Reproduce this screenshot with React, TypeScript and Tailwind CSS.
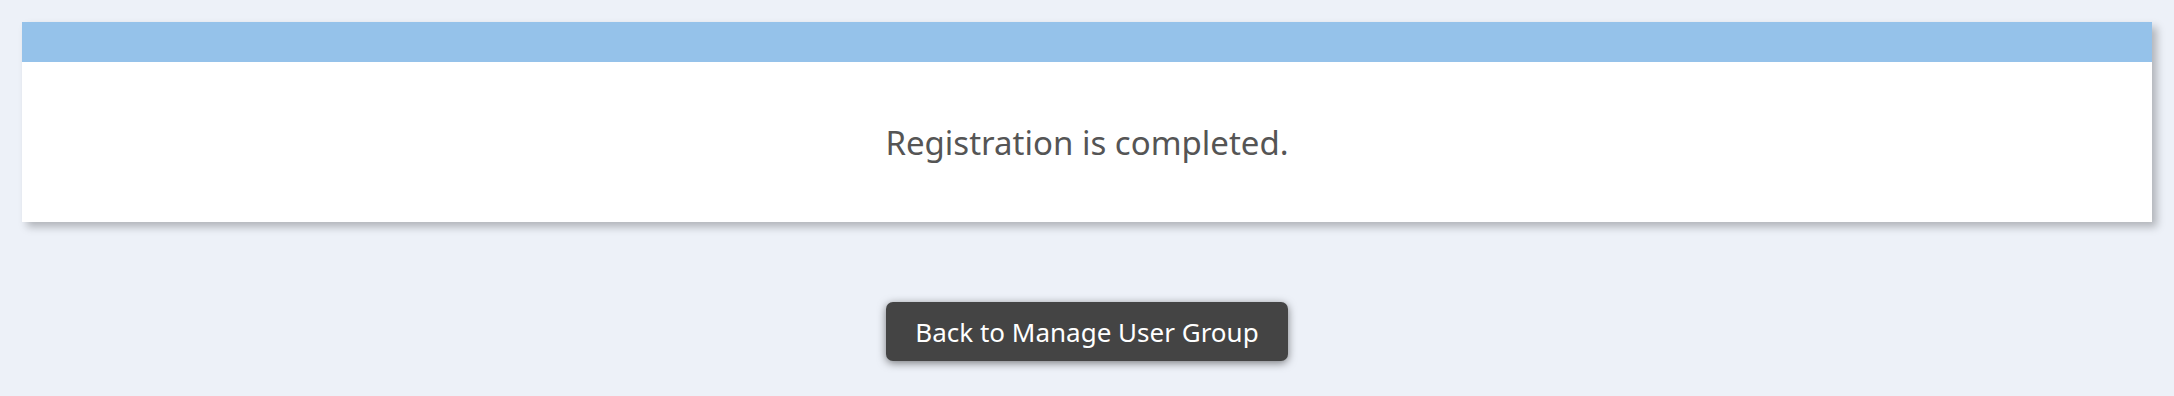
export default function App() {
  return (
    <div className="min-h-[396px] w-full bg-[#edf1f8] px-[22px] pt-[22px] font-['Noto_Sans',Arial,sans-serif]">
      <section className="bg-white shadow-[5px_5px_8px_rgba(0,0,0,0.25)]">
        <div className="h-[40px] bg-[#95c2ea]" />
        <div className="flex h-[160px] items-center justify-center">
          <p className="text-[33px] leading-none text-[#555555]">Registration is completed.</p>
        </div>
      </section>
      <div className="flex justify-center pt-[80px]">
        <button className="h-[59px] w-[402px] rounded-[7px] bg-[#444444] text-[26px] leading-none text-white shadow-[0_2px_8px_rgba(0,0,0,0.5)]">
          Back to Manage User Group
        </button>
      </div>
    </div>
  )
}
